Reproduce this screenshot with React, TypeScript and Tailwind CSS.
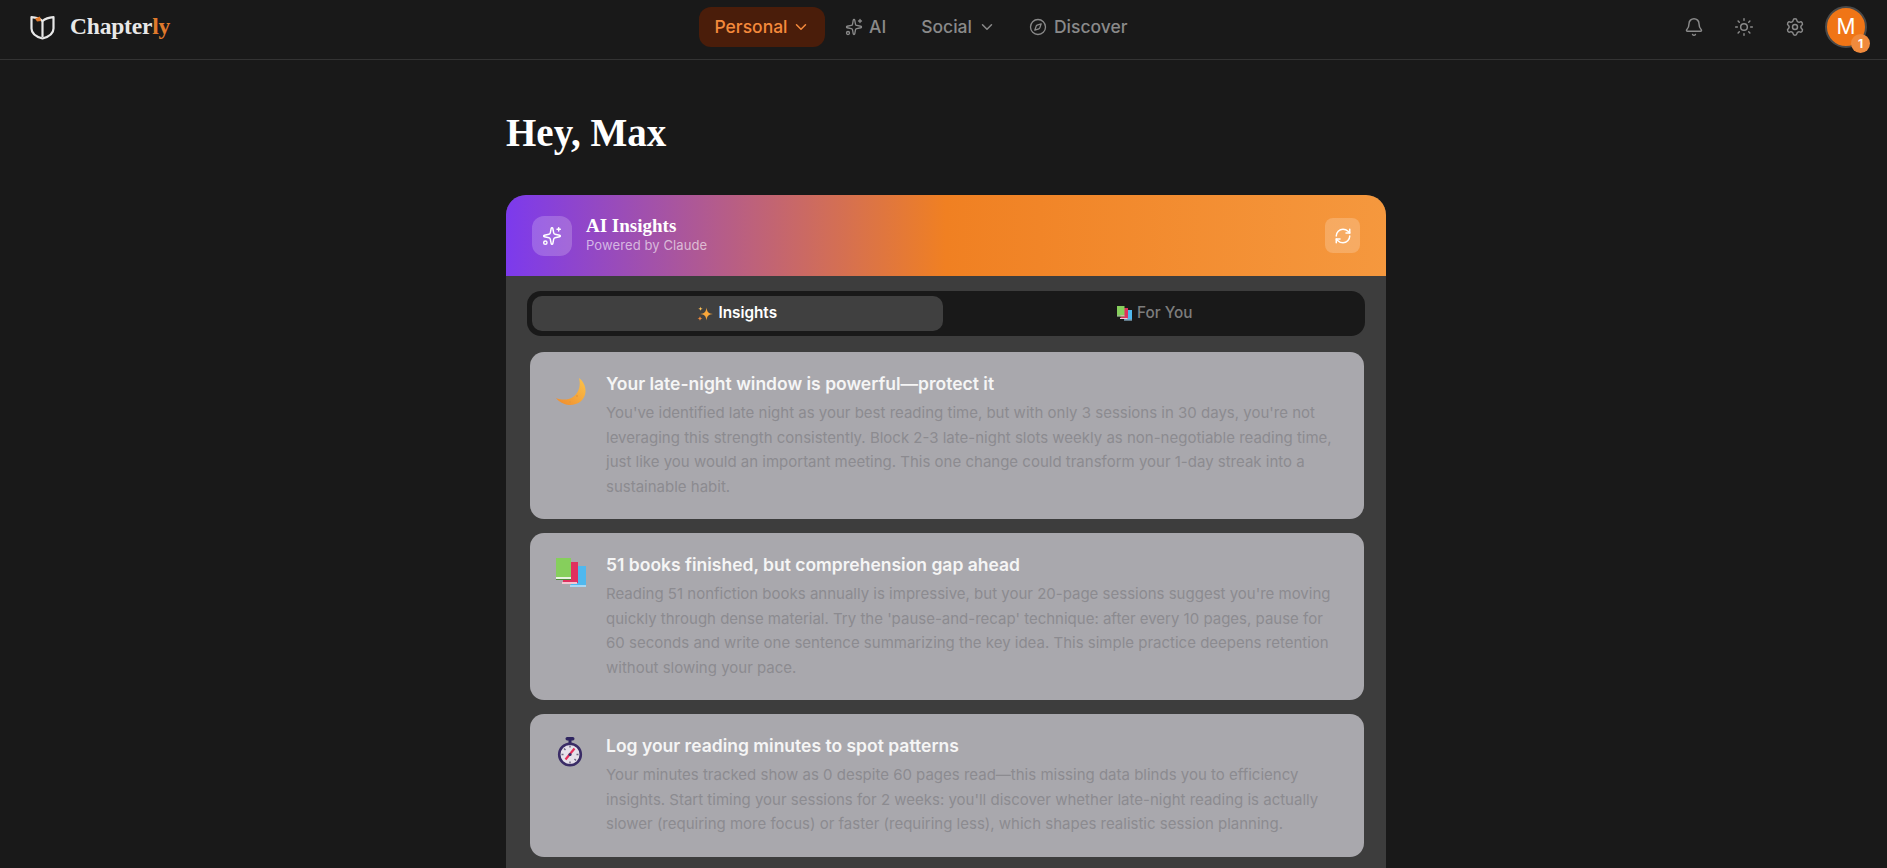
import {Bell, ChevronDown, Compass, RefreshCw, Settings, Sparkles, Sun} from "lucide-react";
import type {ReactNode} from "react";

const LogoMark = () => (
    <svg width="25" height="26" viewBox="0 0 25 26" fill="none">
        <path d="M12.5 7C9.5 4.5 6 3.6 1.5 3.2V14.5C1.5 19.5 7 23 12.5 24.5C18 23 23.5 19.5 23.5 14.5V3.2C19 3.6 15.5 4.5 12.5 7Z" stroke="#e8e8e8" strokeWidth="2.2" strokeLinejoin="round" />
        <path d="M12.5 7V23" stroke="#e8e8e8" strokeWidth="2.2" />
        <path d="M5 4.5L10 2.5L11 7L7 7.5Z" fill="#e07a2c" />
    </svg>
);

const MoonEmoji = () => (
    <svg width="30" height="28" viewBox="0 0 30 28">
        <defs>
            <linearGradient id="moon" x1="0" y1="1" x2="1" y2="0">
                <stop offset="0" stopColor="#f08a2c" />
                <stop offset="1" stopColor="#fbc44a" />
            </linearGradient>
        </defs>
        <path d="M23 0C27 3 30 8 29.5 14C29 22 21.5 27.5 13 27C8 26.5 3 24 0 20C5 22 12 22.5 17 19C23 15 25 7 23 0Z" fill="url(#moon)" />
        <circle cx="21" cy="18" r="1" fill="#e9993a" />
        <circle cx="14" cy="24" r="1" fill="#e9993a" />
    </svg>
);

const BooksEmoji = ({size = 30}: {size?: number}) => (
    <svg width={size} height={size} viewBox="0 0 30 30">
        <rect x="15" y="8" width="15" height="19" fill="#4fb8ee" />
        <rect x="14" y="27" width="16" height="2" fill="#a6d8f5" />
        <rect x="7" y="4" width="15" height="21" fill="#e0305e" />
        <rect x="6" y="24" width="15" height="2" fill="#f3c6d2" />
        <rect x="0" y="0" width="15" height="19" fill="#86cf5c" />
        <rect x="0" y="19" width="15" height="2" fill="#e9f3e2" />
        <rect x="0" y="21" width="15" height="1" fill="#4e8a3a" />
    </svg>
);

const StopwatchEmoji = () => (
    <svg width="26" height="30" viewBox="0 0 26 30">
        <rect x="8.5" y="0" width="9" height="3.5" rx="1.7" fill="#2f2560" />
        <rect x="11.5" y="3" width="3" height="4" fill="#2f2560" />
        <circle cx="13" cy="17.5" r="10.8" fill="#e6e1ea" stroke="#3a2c66" strokeWidth="2.6" />
        <path d="M8.5 22.5L17.5 11.5" stroke="#e5305c" strokeWidth="2.2" />
        <path d="M13 8.5V10.5M13 24.5V26.5M4.5 17.5H6.5M19.5 17.5H21.5M7 11.5L8.5 13M17.5 22L19 23.5" stroke="#6d6780" strokeWidth="1.4" />
        <circle cx="13" cy="17.5" r="1.6" fill="#3a2c66" />
    </svg>
);

const SparkleEmoji = () => (
    <svg width="16" height="16" viewBox="0 0 16 16">
        <path d="M9.5 1.5C10 6 11.5 7.5 16 8C11.5 8.5 10 10 9.5 14.5C9 10 7.5 8.5 3 8C7.5 7.5 9 6 9.5 1.5Z" fill="#f9a63a" />
        <path d="M3.5 0.5C3.7 2 4.3 2.6 5.8 2.8C4.3 3 3.7 3.6 3.5 5.1C3.3 3.6 2.7 3 1.2 2.8C2.7 2.6 3.3 2 3.5 0.5Z" fill="#fbc15a" />
        <path d="M3 10C3.2 11.6 3.9 12.3 5.5 12.5C3.9 12.7 3.2 13.4 3 15C2.8 13.4 2.1 12.7 0.5 12.5C2.1 12.3 2.8 11.6 3 10Z" fill="#ee8a3c" />
    </svg>
);

const insights: {title: string; icon: ReactNode; iconClass: string; body: string}[] = [
    {
        title: "Your late-night window is powerful—protect it",
        icon: <MoonEmoji />,
        iconClass: "pt-[6px] pl-[6px]",
        body: "You've identified late night as your best reading time, but with only 3 sessions in 30 days, you're not leveraging this strength consistently. Block 2-3 late-night slots weekly as non-negotiable reading time, just like you would an important meeting. This one change could transform your 1-day streak into a sustainable habit.",
    },
    {
        title: "51 books finished, but comprehension gap ahead",
        icon: <BooksEmoji />,
        iconClass: "pt-[5px] pl-[6px]",
        body: "Reading 51 nonfiction books annually is impressive, but your 20-page sessions suggest you're moving quickly through dense material. Try the 'pause-and-recap' technique: after every 10 pages, pause for 60 seconds and write one sentence summarizing the key idea. This simple practice deepens retention without slowing your pace.",
    },
    {
        title: "Log your reading minutes to spot patterns",
        icon: <StopwatchEmoji />,
        iconClass: "pt-[3px] pl-[7px]",
        body: "Your minutes tracked show as 0 despite 60 pages read—this missing data blinds you to efficiency insights. Start timing your sessions for 2 weeks: you'll discover whether late-night reading is actually slower (requiring more focus) or faster (requiring less), which shapes realistic session planning.",
    },
];

export default function App() {
    return (
        <div className="h-screen overflow-hidden bg-[#191919] font-['Inter',sans-serif]">
            <header className="flex h-[60px] items-center border-b border-[#333333] pb-[5px] pl-[30px] pr-[20px]">
                <div className="flex w-[669px] items-center gap-[15px]">
                    <LogoMark />
                    <span className="font-['Liberation_Serif',serif] text-[23.5px] font-bold tracking-[-0.2px] text-[#e8e8e8]">
                        Chapter<span className="text-[#e07a2c]">ly</span>
                    </span>
                </div>
                <nav className="flex items-center text-[17.5px] font-medium text-[#8a8a8a]">
                    <button className="flex h-10 w-[126px] items-center justify-center gap-[4px] rounded-xl bg-[#4a1d0a] text-[#f58a3c]">
                        Personal
                        <ChevronDown size={18} strokeWidth={2} />
                    </button>
                    <span className="ml-5 flex items-center gap-[6px]">
                        <Sparkles size={18} strokeWidth={1.75} />
                        AI
                    </span>
                    <span className="ml-[35px] flex items-center gap-[6px]">
                        Social
                        <ChevronDown size={18} strokeWidth={2} />
                    </span>
                    <span className="ml-[33px] flex items-center gap-[7px]">
                        <Compass size={18} strokeWidth={1.75} />
                        Discover
                    </span>
                </nav>
                <div className="ml-auto flex items-center text-[#8a8a8a]">
                    <Bell size={20} strokeWidth={1.75} />
                    <Sun size={20} strokeWidth={1.75} className="ml-[30px]" />
                    <Settings size={20} strokeWidth={1.75} className="ml-[31px]" />
                    <div className="relative ml-[20px] flex size-[42px] items-center justify-center rounded-full border-2 border-[#4a4a4a] bg-[#f07516] text-[21px] font-normal text-white">
                        M
                        <span className="absolute -bottom-[7px] -right-[5px] flex size-[19px] items-center justify-center rounded-full bg-[#f08a3c] text-[12px] font-bold text-white">
                            1
                        </span>
                    </div>
                </div>
            </header>

            <main className="ml-[506px] w-[880px] pt-[51px]">
                <h1 className="font-['Liberation_Serif',serif] text-[39px] font-bold leading-[44px] text-white">Hey, Max</h1>

                <section className="mt-[40px] overflow-hidden rounded-[20px] bg-[#3d3d3d]">
                    <div className="flex h-[81px] items-center bg-linear-to-r/srgb from-[#7c3aed] via-[#f08022] to-[#f5983e] px-[26px]">
                        <div className="flex size-10 items-center justify-center rounded-xl bg-white/20 text-white">
                            <Sparkles size={20} strokeWidth={1.75} />
                        </div>
                        <div className="ml-[14px] pb-[2px]">
                            <div className="font-['Liberation_Serif',serif] text-[19px] font-bold leading-[20px] text-white">AI Insights</div>
                            <div className="mt-px text-[13px] leading-[16px] tracking-[0.1px] text-white/60">Powered by Claude</div>
                        </div>
                        <button className="ml-auto flex size-[35px] items-center justify-center rounded-lg bg-white/20 text-white">
                            <RefreshCw size={18} strokeWidth={2} />
                        </button>
                    </div>

                    <div className="px-[21px] pt-[15px] pb-10">
                        <div className="grid grid-cols-2 gap-[7px] rounded-[14px] bg-[#191919] p-[5px] text-[15.3px] font-medium">
                            <div className="flex h-[35px] items-center justify-center gap-[5px] rounded-[10px] bg-[#404040] font-semibold text-white">
                                <SparkleEmoji />
                                Insights
                            </div>
                            <div className="flex h-[35px] items-center justify-center gap-[5px] text-[#7d7d7d]">
                                <BooksEmoji size={15} />
                                For You
                            </div>
                        </div>

                        <div className="mt-4 ml-[3px] flex w-[834px] flex-col gap-[14px]">
                            {insights.map((item) => (
                                <article key={item.title} className="flex gap-[20px] rounded-[14px] bg-[#a9a8ad] p-5">
                                    <div className={`w-9 shrink-0 ${item.iconClass}`}>{item.icon}</div>
                                    <div>
                                        <h3 className="text-[17.5px] font-semibold leading-6 text-[#f5f5f5]">{item.title}</h3>
                                        <p className="mt-[5px] text-[15px] leading-[24.5px] text-[#8c8b90]">{item.body}</p>
                                    </div>
                                </article>
                            ))}
                        </div>
                    </div>
                </section>
            </main>
        </div>
    );
}
